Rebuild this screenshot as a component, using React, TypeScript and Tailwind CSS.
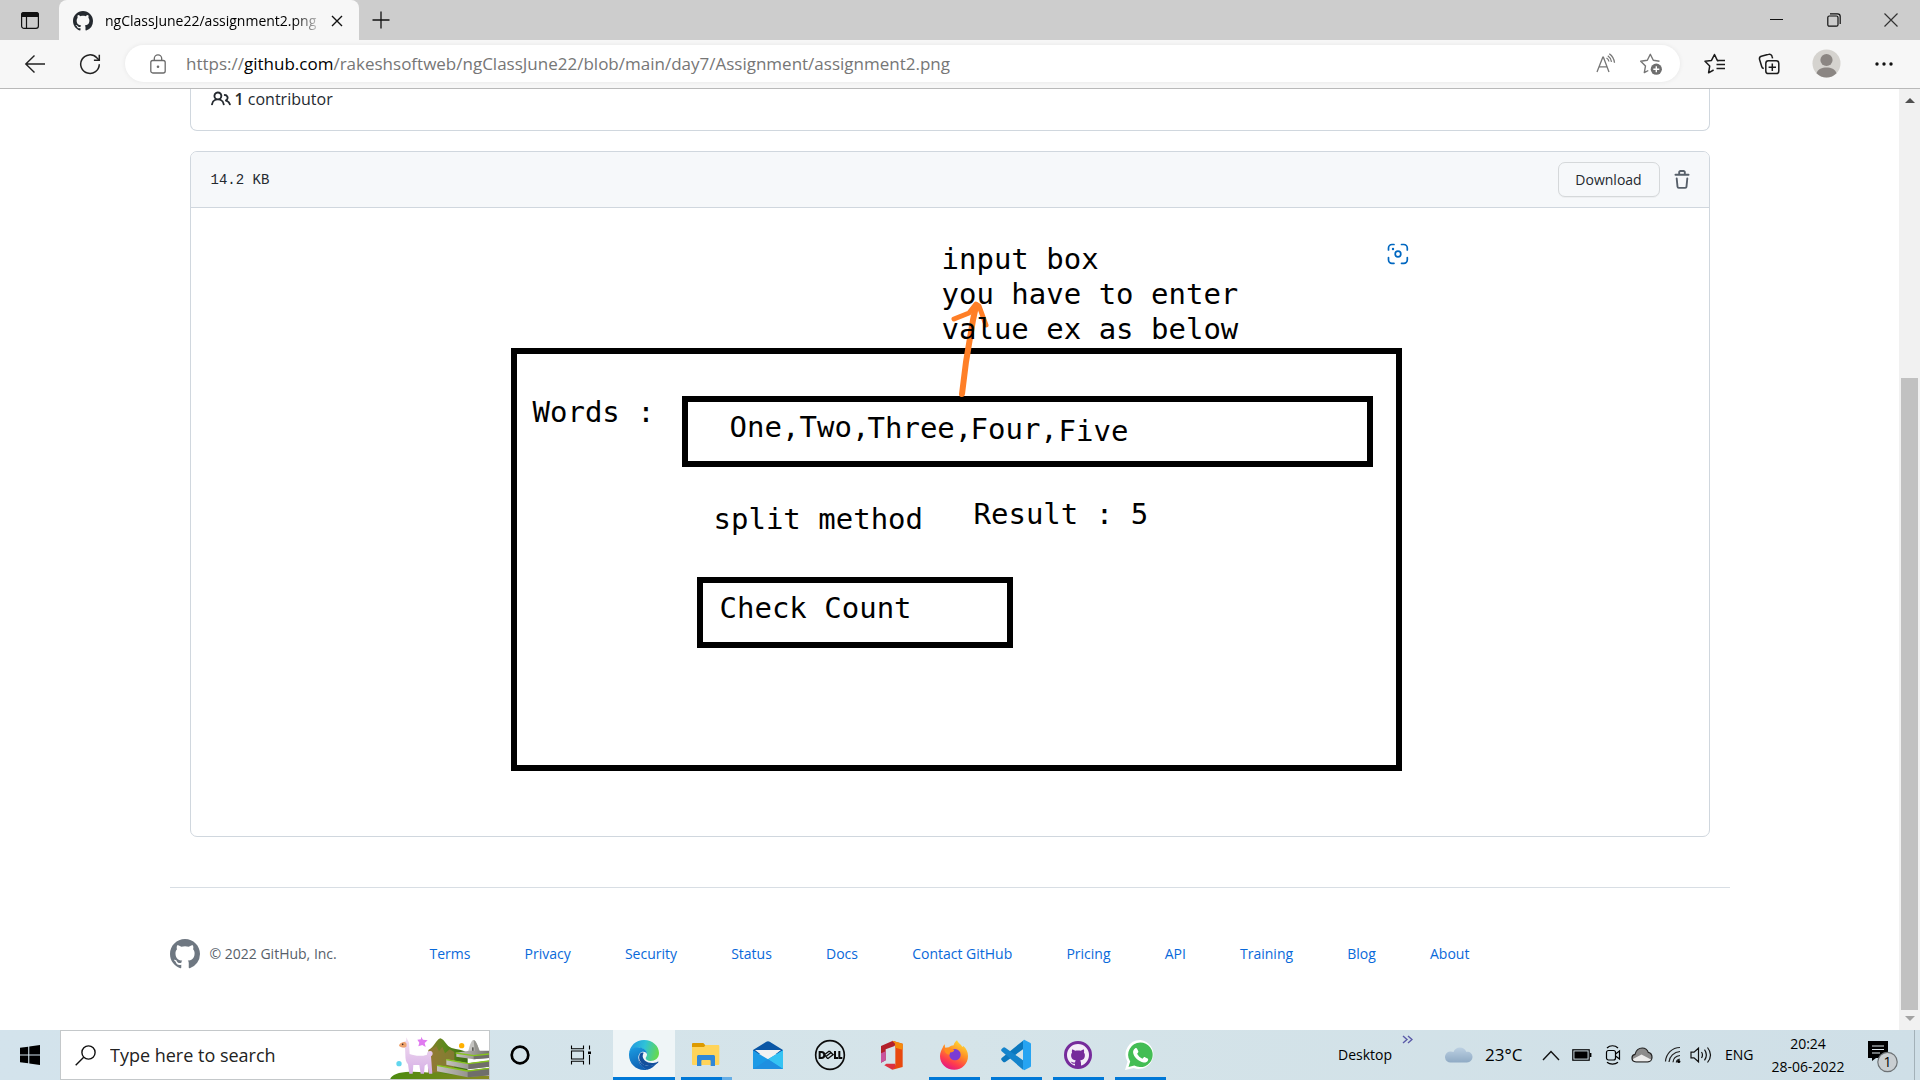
import type { ReactNode } from "react";

const SANS = "font-['Open_Sans','Noto_Sans',sans-serif]";

function GithubMark({ size, color, className }: { size: number; color: string; className?: string }) {
  return (
    <svg width={size} height={size} viewBox="0 0 16 16" fill={color} className={className}>
      <path
        fillRule="evenodd"
        d="M8 0C3.580 0 0 3.580 0 8c0 3.540 2.290 6.530 5.470 7.590.4.070.550-.170.550-.380 0-.190-.010-.820-.010-1.490-2.010.370-2.530-.490-2.690-.940-.090-.230-.480-.940-.820-1.130-.280-.150-.680-.520-.010-.530.630-.010 1.080.580 1.230.820.720 1.210 1.870.870 2.330.660.070-.520.280-.870.510-1.070-1.780-.200-3.640-.890-3.640-3.950 0-.870.310-1.590.820-2.150-.080-.200-.360-1.020.080-2.120 0 0 .670-.210 2.200.820.640-.180 1.320-.270 2-.270.680 0 1.360.090 2 .270 1.530-1.040 2.200-.820 2.200-.820.440 1.100.160 1.920.080 2.120.510.560.820 1.270.820 2.150 0 3.070-1.870 3.750-3.650 3.950.290.250.540.730.540 1.480 0 1.070-.010 1.930-.010 2.200 0 .210.150.460.550.380A8.013 8.013 0 0 0 16 8c0-4.420-3.580-8-8-8z"
      />
    </svg>
  );
}

function PeopleIcon() {
  return (
    <svg width="20" height="20" viewBox="0 0 16 16" fill="currentColor">
      <path
        fillRule="evenodd"
        d="M5.5 3.5a2 2 0 1 0 0 4 2 2 0 0 0 0-4zM2 5.5a3.5 3.5 0 1 1 5.898 2.549 5.507 5.507 0 0 1 3.034 4.084.75.75 0 1 1-1.482.235 4.001 4.001 0 0 0-7.9 0 .75.75 0 0 1-1.482-.236A5.507 5.507 0 0 1 3.102 8.05 3.49 3.49 0 0 1 2 5.5zM11 4a.75.75 0 1 0 0 1.5 1.5 1.5 0 0 1 .666 2.844.75.75 0 0 0-.416.672v.352a.75.75 0 0 0 .574.73c1.2.289 2.162 1.2 2.522 2.372a.75.75 0 1 0 1.434-.44 5.01 5.01 0 0 0-2.56-3.012A3 3 0 0 0 11 4z"
      />
    </svg>
  );
}

function TrashIcon() {
  return (
    <svg width="20" height="20" viewBox="0 0 16 16" fill="currentColor">
      <path
        fillRule="evenodd"
        d="M6.5 1.75a.25.25 0 0 1 .25-.25h2.5a.25.25 0 0 1 .25.25V3h-3V1.75zm4.5 0V3h2.25a.75.75 0 0 1 0 1.5H2.75a.75.75 0 0 1 0-1.5H5V1.75C5 .784 5.784 0 6.75 0h2.5C10.216 0 11 .784 11 1.75zM4.496 6.675a.75.75 0 1 0-1.492.15l.66 6.6A1.75 1.75 0 0 0 5.405 15h5.19c.9 0 1.652-.681 1.741-1.576l.66-6.6a.75.75 0 0 0-1.492-.149l-.66 6.6a.25.25 0 0 1-.249.225h-5.19a.25.25 0 0 1-.249-.225l-.66-6.6z"
      />
    </svg>
  );
}

/* ---------- Browser chrome ---------- */

function TabStrip() {
  return (
    <header className="flex h-10 items-stretch bg-[#cdcdcd] pb-px">
      <button aria-label="Tab actions" className="flex w-[59px] items-center justify-center">
        <svg width="20" height="20" viewBox="0 0 20 20" fill="none" stroke="#111" strokeWidth="1.2">
          <rect x="1.6" y="2.6" width="16.8" height="15.8" rx="2.4" />
          <path d="M1.6 6.5V5a2.4 2.4 0 0 1 2.4-2.4h12A2.4 2.4 0 0 1 18.4 5v1.5z" fill="#111" />
          <path d="M6.5 6.5v12" />
        </svg>
      </button>
      <div className="-mb-[2px] flex w-[300px] items-center rounded-t-lg bg-[#f7f7f7] pl-[14px] pr-2">
        <GithubMark size={20} color="#24292f" className="shrink-0" />
        <div className="ml-3 w-[218px] whitespace-nowrap text-sm leading-5 text-black [mask-image:linear-gradient(to_right,#000_190px,transparent)]">
          ngClassJune22/assignment2.png
        </div>
        <button aria-label="Close tab" className="flex flex-1 items-center justify-center">
          <svg width="12" height="12" viewBox="0 0 12 12" stroke="#111" strokeWidth="1.4">
            <path d="M1 1l10 10M11 1L1 11" />
          </svg>
        </button>
      </div>
      <button aria-label="New tab" className="flex w-11 items-center justify-center">
        <svg width="18" height="18" viewBox="0 0 18 18" stroke="#111" strokeWidth="1.3">
          <path d="M9 .5v17M.5 9h17" />
        </svg>
      </button>
      <div className="flex-1" />
      <button aria-label="Minimize" className="flex w-[57px] items-center justify-center">
        <svg width="13" height="13" viewBox="0 0 13 13" stroke="#111">
          <path d="M0 6.5h13" />
        </svg>
      </button>
      <button aria-label="Restore" className="flex w-[57px] items-center justify-center">
        <svg width="14" height="14" viewBox="0 0 14 14" fill="none" stroke="#111" strokeWidth="1.2">
          <rect x=".8" y="3" width="10.2" height="10.2" rx="1.5" />
          <path d="M3 .8h7.5a2.7 2.7 0 0 1 2.7 2.7V11" />
        </svg>
      </button>
      <button aria-label="Close window" className="flex w-[58px] items-center justify-center">
        <svg width="14" height="14" viewBox="0 0 14 14" stroke="#333" strokeWidth="1.2">
          <path d="M.5.5l13 13M13.5.5l-13 13" />
        </svg>
      </button>
    </header>
  );
}

function Toolbar() {
  return (
    <nav className="flex h-[49px] items-center border-b border-[#b9b9b9] bg-[#f7f7f7] pr-6 pb-px">
      <button aria-label="Back" className="ml-6 flex w-[22px] items-center">
        <svg width="22" height="20" viewBox="0 0 22 20" fill="none" stroke="#222" strokeWidth="1.4">
          <path d="M21 10H1.8M10.5 1.5L1.8 10l8.7 8.5" />
        </svg>
      </button>
      <button aria-label="Refresh" className="ml-[33px] flex w-[22px] items-center">
        <svg width="22" height="22" viewBox="0 0 22 22" fill="none" stroke="#222" strokeWidth="1.5">
          <path d="M20.3 11.3A9.3 9.3 0 1 1 17.8 4.8l2.2 2.2" />
          <path d="M20.3 1.8v5.4h-5.4" />
        </svg>
      </button>
      <div className="ml-6 flex h-[37px] flex-1 items-center rounded-full bg-white pl-[25px] pr-[17px] shadow-[0_0_5px_rgba(0,0,0,0.07)]">
        <svg width="16" height="20" viewBox="0 0 16 20" fill="none" stroke="#6b6b6b" strokeWidth="1.3">
          <rect x=".8" y="6.5" width="14.4" height="12.5" rx="2" />
          <path d="M4.3 6.5V4.5a3.7 3.7 0 0 1 7.4 0v2" />
          <circle cx="8" cy="12.7" r="1.3" fill="#6b6b6b" stroke="none" />
        </svg>
        <label className="relative ml-5 flex-1 text-[17px] leading-6 text-[#767676]">
          <span>https://</span>
          <span className="text-black">github.com</span>
          <span>/rakeshsoftweb/ngClassJune22/blob/main/day7/Assignment/assignment2.png</span>
          <input aria-label="Address" className="absolute inset-0 w-full opacity-0" />
        </label>
        <button aria-label="Read aloud">
          <svg width="22" height="22" viewBox="0 0 22 22" fill="none" stroke="#767676" strokeWidth="1.3">
            <path d="M2 19L7.8 4.2h.6L14 19M4.2 13.8h7.6" />
            <path d="M11.500 5c1.400.8 2.200 2 2.400 3.500M12.800 2.800c2 1.400 3.300 3.300 3.700 6M14.300.8c2.900 2 4.800 4.900 5.200 9" />
          </svg>
        </button>
        <button aria-label="Add to favorites" className="ml-[22px]">
          <svg width="24" height="24" viewBox="0 0 24 24" fill="none">
            <path d="M20.500 9.200L14.300 8.300 11.300 2.300 8.300 8.300 1.700 9.200l4.800 4.700-1.200 6.700 4-2.100" stroke="#767676" strokeWidth="1.4" strokeLinejoin="round" />
            <circle cx="17.300" cy="17.200" r="5.600" fill="#6e6e6e" />
            <path d="M17.300 14.200v6M14.300 17.200h6" stroke="#fff" strokeWidth="1.400" />
          </svg>
        </button>
      </div>
      <button aria-label="Favorites" className="ml-6">
        <svg width="22" height="22" viewBox="0 0 22 22" fill="none" stroke="#1b1b1b" strokeWidth="1.5" strokeLinejoin="round">
          <path d="M14.500 7.700L13.300 7.400 10.500 1.500 7.500 7.400 1 8.300l4.700 4.800-1.100 6.700 5-2.800" />
          <path d="M13 7.500h8M12.500 11.500H21M12.500 15.500H21" />
        </svg>
      </button>
      <button aria-label="Collections" className="ml-8">
        <svg width="22" height="22" viewBox="0 0 22 22" fill="none" stroke="#1b1b1b" strokeWidth="1.5">
          <rect x="7.800" y="7.800" width="13" height="12.800" rx="2.600" />
          <path d="M14.300 10.500v7.400M10.600 14.200H18" />
          <path d="M5.800 15.600A2.700 2.700 0 0 1 3.700 13.500L1.500 6.300A2.600 2.600 0 0 1 3.300 3.300l7.400-2A2.600 2.600 0 0 1 14 3.200l.6 2.200" />
        </svg>
      </button>
      <button aria-label="Profile" className="ml-8">
        <svg width="29" height="29" viewBox="0 0 29 29">
          <circle cx="14.500" cy="14.500" r="14" fill="#d5d3cf" />
          <circle cx="14.500" cy="11" r="6.100" fill="#8b8683" />
          <path d="M4.500 24.300C6 20 10 18.600 14.500 18.600S23 20 24.500 24.300A14 14 0 0 1 4.500 24.300z" fill="#8b8683" />
        </svg>
      </button>
      <button aria-label="Settings and more" className="ml-[31px]">
        <svg width="24" height="20" viewBox="0 0 24 20" fill="#111">
          <circle cx="5" cy="10" r="1.700" />
          <circle cx="12" cy="10" r="1.700" />
          <circle cx="19" cy="10" r="1.700" />
        </svg>
      </button>
    </nav>
  );
}

function Scrollbar() {
  return (
    <div className="flex w-[21px] flex-col items-center bg-[#f1f1f1] py-2">
      <svg width="10" height="8" viewBox="0 0 10 8">
        <path d="M5 1l5 5H0z" fill="#505050" />
      </svg>
      <div className="grow-[273]" />
      <div className="w-[17px] grow-[632] bg-[#c1c1c1]" />
      <svg width="10" height="8" viewBox="0 0 10 8" className="mt-1">
        <path d="M5 7L0 2h10z" fill="#a3a3a3" />
      </svg>
    </div>
  );
}

/* ---------- Page ---------- */

function Note({ className, children }: { className: string; children: ReactNode }) {
  return (
    <div className={`absolute whitespace-pre font-['DejaVu_Sans_Mono',monospace] text-[29px] leading-[35px] text-black ${className}`}>
      {children}
    </div>
  );
}

function Sketch() {
  return (
    <figure className="relative mx-auto h-[628px] w-[920px]">
      <div className="absolute top-[140px] left-[21px] h-[423px] w-[891px] border-[6px] border-black" />
      <div className="absolute top-[188px] left-[192px] h-[71px] w-[691px] border-[6px] border-black" />
      <div className="absolute top-[369px] left-[207px] h-[71px] w-[316px] border-[6px] border-black" />
      <svg className="absolute top-[90px] left-[443px]" width="60" height="104" viewBox="0 0 60 104" fill="none" stroke="#ff7f27" strokeLinecap="round" strokeLinejoin="round">
        <path d="M29 96L33 64 40 22 43 8" strokeWidth="6" />
        <path d="M21 21L36 15 43 6 46 8 53 27" strokeWidth="5" />
      </svg>
      <Note className="top-[34px] left-[452px]">{"input box\nyou have to enter\nvalue ex as below"}</Note>
      <Note className="top-[187px] left-[43px]">Words :</Note>
      <Note className="top-[202px] left-[240px]">One,</Note>
      <Note className="top-[202px] left-[310px]">Two,</Note>
      <Note className="top-[203px] left-[378px]">Three,</Note>
      <Note className="top-[204px] left-[481px]">Four,</Note>
      <Note className="top-[206px] left-[569px]">Five</Note>
      <Note className="top-[294px] left-[224px]">split method</Note>
      <Note className="top-[289px] left-[484px]">Result : 5</Note>
      <Note className="top-[383px] left-[230px]">Check Count</Note>
      <button aria-label="Visual search" className="absolute top-[34px] right-0">
        <svg width="24" height="24" viewBox="0 0 24 24" fill="none" stroke="#0067c0" strokeWidth="1.700" strokeLinecap="round">
          <path d="M2.500 8V6A3.500 3.500 0 0 1 6 2.500h2M15.500 2.500h2.300A3.500 3.500 0 0 1 21.300 6v2M21.300 15.500v2.300a3.500 3.500 0 0 1-3.500 3.500h-2.300M8 21.300H6a3.500 3.500 0 0 1-3.500-3.500v-2.300" />
          <circle cx="12" cy="12" r="2.800" />
          <circle cx="7" cy="7" r="1.200" fill="#0067c0" stroke="none" />
        </svg>
      </button>
    </figure>
  );
}

const FOOTER_LINKS = ["Terms", "Privacy", "Security", "Status", "Docs", "Contact GitHub", "Pricing", "API", "Training", "Blog", "About"];

function Page() {
  return (
    <main className="flex-1 bg-white">
      <div className="mx-auto max-w-[1560px]">
        <section className="mx-5 flex items-start rounded-b-[7px] border border-t-0 border-[#d0d7de] px-5 pb-[21px] text-base leading-5 text-[#24292f]">
          <PeopleIcon />
          <a href="#contributors" className="ml-1">
            <b className="font-semibold">1</b> contributor
          </a>
        </section>
        <section className="mx-5 mt-5 overflow-hidden rounded-[7px] border border-[#d0d7de]">
          <div className="flex h-14 items-center border-b border-[#d0d7de] bg-[#f6f8fa] pl-5 pr-[17px]">
            <span className="font-['Liberation_Mono',monospace] text-sm text-[#24292f]">14.2 KB</span>
            <a href="#download" className="ml-auto flex h-[35px] w-[102px] items-center justify-center rounded-[7px] border border-[#d5d8da] bg-[#f6f8fa] text-sm font-medium text-[#24292f] shadow-[0_1px_0_rgba(27,31,36,0.04)]">
              Download
            </a>
            <button aria-label="Delete this file" className="ml-3 text-[#57606a]">
              <TrashIcon />
            </button>
          </div>
          <Sketch />
        </section>
        <footer className="mt-[50px] grid grid-cols-[2fr_8fr_2fr] items-center border-t border-[#d8dee4] pt-[51px] pb-11 text-sm leading-[30px]">
          <div className="flex items-center text-[#57606a]">
            <GithubMark size={30} color="#6e7781" />
            <span className="ml-[10px]">© 2022 GitHub, Inc.</span>
          </div>
          <ul className="flex justify-between text-[#0969da]">
            {FOOTER_LINKS.map((name) => (
              <li key={name}>
                <a href="#footer">{name}</a>
              </li>
            ))}
          </ul>
        </footer>
      </div>
    </main>
  );
}

/* ---------- Taskbar ---------- */

function SearchArt() {
  return (
    <svg width="99" height="48" viewBox="1173 33 297 144" className="ml-auto shrink-0">
      <defs>
        <linearGradient id="hill" x1="0" x2="1">
          <stop offset="0" stopColor="#4c8a10" />
          <stop offset="1" stopColor="#8a8a22" />
        </linearGradient>
        <linearGradient id="mount" x1="0" x2="1">
          <stop offset="0" stopColor="#8c7a2a" />
          <stop offset=".4" stopColor="#5c8a1c" />
          <stop offset="1" stopColor="#3d6b12" />
        </linearGradient>
        <linearGradient id="stone" x1="0" x2="1">
          <stop offset="0" stopColor="#c4c2bd" />
          <stop offset="1" stopColor="#77756f" />
        </linearGradient>
        <linearGradient id="llama" x1="0" x2="0" y1="0" y2="1">
          <stop offset="0" stopColor="#f3e0f0" />
          <stop offset="1" stopColor="#d5aee6" />
        </linearGradient>
      </defs>
      <path d="M1288 90c18-8 22-30 36-35 14 4 18 24 34 29 16 4 34 6 48 14v70h-118z" fill="url(#mount)" />
      <path d="M1290 92c8-6 16-8 22-14l8 16 10-14 8 20 14-12 14 8v60h-76z" fill="#96783a" opacity=".75" />
      <path d="M1173 180c2-14 22-24 60-25 50-1 100 8 150 10l87 2v13z" fill="url(#hill)" />
      <path d="M1406 104c4-22 10-44 18-44s16 28 22 44z" fill="#c4c3c0" />
      <path d="M1424 60c8 0 16 28 22 44h-18z" fill="#95948f" />
      <rect x="1419" y="82" width="5" height="14" fill="#5f5e5a" />
      <path d="M1372 98l38-6h60v22l-46 4-52-8z" fill="url(#stone)" />
      <path d="M1342 118l66 12 62-8v18l-62 8-66-14z" fill="url(#stone)" />
      <path d="M1314 136l92 16 64-8v22l-64 6-92-18z" fill="url(#stone)" />
      <path d="M1406 152l64-8v22l-64 6zM1408 130l62-8v18l-62 8zM1424 106l46-5v13l-46 4z" fill="#706e6a" />
      <path d="M1370 99l54 8 46-5M1342 119l66 12 62-8M1314 136l92 17 64-8" fill="none" stroke="#86c41e" strokeWidth="4" />
      <path d="M1222 52l8 16 2 34c16 6 34 8 52 2 0-8 4-12 10-11 9 1 9 12 2 16l4 52h-10l-5-30-8 6-2 24h-10l-4-26h-18l-2 26h-10l-4-28c-6-6-8-16-8-28l-1-22c-8 1-13-2-14-8 4-8 10-10 17-12z" fill="url(#llama)" />
      <path d="M1214 66c8 0 10 6 8 14-10 5-21 2-22-4 2-6 8-9 14-10z" fill="#eea46f" />
      <circle cx="1211" cy="73" r="2.500" fill="#3a2222" />
      <path d="M1266 50l6 9 14 2-9 8 3 12-10-6-12 4 3-11-6-9 11-1z" fill="#e07bf0" />
      <circle cx="1388" cy="77" r="8" fill="#ffb000" />
      <circle cx="1200" cy="131" r="8" fill="#62d6ee" />
    </svg>
  );
}

function Task({ label, children, active, open, more }: { label: string; children: ReactNode; active?: boolean; open?: boolean; more?: boolean }) {
  return (
    <button aria-label={label} className={`flex w-[62px] shrink-0 flex-col items-center ${active ? "bg-[#eff5f7]" : ""}`}>
      <span className="flex h-[47px] items-center pt-[3px]">{children}</span>
      {active && <span className="h-[3px] w-full bg-[#0078d7]" />}
      {open && (
        <span className="flex h-[3px] w-[51px] bg-[#0078d7]">{more && <span className="ml-auto w-[10px] bg-[#66aee6]" />}</span>
      )}
    </button>
  );
}

function EdgeIcon() {
  return (
    <svg width="32" height="32" viewBox="0 0 96 96">
      <defs>
        <linearGradient id="e1" x1="0" y1=".3" x2="1" y2=".5">
          <stop offset="0" stopColor="#2196e0" />
          <stop offset=".5" stopColor="#2fc2d8" />
          <stop offset="1" stopColor="#66d94d" />
        </linearGradient>
        <linearGradient id="e2" x1="0" y1="0" x2=".3" y2="1">
          <stop offset="0" stopColor="#1b9de2" />
          <stop offset="1" stopColor="#0f62b4" />
        </linearGradient>
      </defs>
      <path d="M3 45C5 20 24 3 48 3c26 0 45 18 45 39 0 16-12 24-25 24-10 0-15-4-15-8 0-3 4-5 4-12 0-12-14-20-27-20C16 26 6 35 3 45z" fill="url(#e1)" />
      <path d="M3 48C3 34 15 25 29 25c16 0 28 9 28 20-2-5-7-7-11-7-9 0-15 8-15 19 0 16 12 29 27 35-4 1-7 1-10 1C23 93 3 73 3 48z" fill="url(#e2)" />
      <path d="M38 42c-5 6-6 14-3 22 5 12 17 18 31 17 9-1 18-4 24-10 2-2 1-4-1-3-6 3-12 4-17 4-16 0-27-9-28-20 0-4 1-8 3-11-4-1-7-1-9 1z" fill="#134f9c" />
      <path d="M31 57c0 16 12 30 27 35 12-3 22-10 28-20-9 8-20 10-29 8-15-3-24-12-26-23z" fill="#1053a4" />
    </svg>
  );
}

function FirefoxIcon() {
  return (
    <svg width="30" height="30" viewBox="266 57 90 90">
      <defs>
        <linearGradient id="f1" x1=".8" y1="0" x2=".3" y2="1">
          <stop offset="0" stopColor="#ffe636" />
          <stop offset=".45" stopColor="#ff8a26" />
          <stop offset=".75" stopColor="#ff3d4d" />
          <stop offset="1" stopColor="#e11586" />
        </linearGradient>
      </defs>
      <path d="M284 70c-1 5 0 8 1 10l10-1c5-4 10-6 15-6 1-6 5-11 10-15 3 7 8 10 12 14l4 6 3-3c9 8 14 18 14 30 0 24-18 41-41 41-25 0-43-17-43-41 0-12 5-19 8-25 1-4 3-7 7-10z" fill="url(#f1)" />
      <circle cx="314" cy="101" r="17" fill="#7a3bd4" />
      <path d="M282 84c8-5 20-4 28 2 4 3-2 7-8 8-3 1-4 3-4 7-9 0-16-7-16-17z" fill="#ff8f1f" />
    </svg>
  );
}

function TaskIcons() {
  return (
    <div className="-ml-px flex">
      <Task label="Cortana">
        <svg width="20" height="20" viewBox="0 0 20 20" fill="none" stroke="#000">
          <circle cx="10" cy="10" r="8.300" strokeWidth="2.700" />
        </svg>
      </Task>
      <Task label="Task view">
        <svg width="24" height="20" viewBox="0 0 24 20" fill="none" stroke="#000" strokeWidth="1.100">
          <path d="M1.500.5v3.300h12V.5M1.500 19.500v-3.300h12v3.300M1.500 6h12v8h-12zM19.500.5v4M19.500 10v9.500" />
          <rect x="18" y="6.500" width="3" height="2.600" fill="#000" stroke="none" />
        </svg>
      </Task>
      <Task label="Microsoft Edge" active>
        <EdgeIcon />
      </Task>
      <Task label="File Explorer" open more>
        <svg width="30" height="28" viewBox="603 63 90 84">
          <path d="M606 72c0-2 1-3 3-3h31l6 7v12h-40z" fill="#dd9a00" />
          <path d="M606 81h36l5-6h38c2 0 3 1 3 3v54c0 2-1 3-3 3h-76c-2 0-3-1-3-3z" fill="#ffd45a" />
          <path d="M621 138v-28c0-3 2-5 5-5h44c3 0 5 2 5 5v28h-13v-15c0-2-1-3-3-3h-22c-2 0-3 1-3 3v15z" fill="#2f87d8" />
        </svg>
      </Task>
      <Task label="Mail">
        <svg width="32" height="30" viewBox="786 60 96 90">
          <path d="M789 90l40-25c3-2 7-2 10 0l40 25v12h-90z" fill="#0a56a5" />
          <path d="M795 90h78l-39 30z" fill="#f2f2f2" />
          <path d="M789 91l45 27 45-27v56h-90z" fill="#1c9ae6" />
          <path d="M834 118l45-27v56z" fill="#35c3f3" />
          <path d="M789 147l45-29 45 29z" fill="#1f8fe0" />
        </svg>
      </Task>
      <Task label="Dell">
        <svg width="32" height="32" viewBox="972 57 96 96" fill="none" stroke="#0b0b0b">
          <circle cx="1020" cy="105" r="43" strokeWidth="5" />
          <path d="M989 96v18h5c12 0 12-18 0-18zM1035 93v21h9M1048 93v21h9" strokeWidth="6" />
          <path d="M1003 104l15-11M1007 110l17-13M1013 116l18-13M1003 104l10 12M1018 93l10 10" strokeWidth="4" />
        </svg>
      </Task>
      <Task label="Office">
        <svg width="26" height="30" viewBox="85 58 78 90">
          <path d="M91 76l34-15 10 3-3 12-27 10v33l-14 7z" fill="#b3202a" />
          <path d="M91 98l14-6v27l-14 7z" fill="#c9549d" />
          <path d="M125 60l31 9v70l-31 8 9-14V70z" fill="#e8490f" />
          <path d="M125 60l31 9v18l-22-6V70z" fill="#f58b0b" />
          <path d="M101 134l6-5h27v10l-9 8z" fill="#dc3140" />
        </svg>
      </Task>
      <Task label="Firefox" open>
        <FirefoxIcon />
      </Task>
      <Task label="Visual Studio Code" open>
        <svg width="32" height="32" viewBox="450 57 96 96">
          <path d="M519 62v26l-53 38c-3 2-5 1-7-1l-4-4c-2-2-2-5 0-7z" fill="#0b78be" />
          <path d="M455 94c-2-2-2-5 0-7l4-4c2-2 5-2 7 0l53 38v28z" fill="#1484cc" />
          <path d="M519 62c2-2 3-3 5-2l16 8c2 1 3 2 3 4v66c0 2-1 3-3 4l-16 8c-2 1-4 0-5-2z" fill="#27a4f2" />
        </svg>
      </Task>
      <Task label="GitHub Desktop" open>
        <svg width="28" height="28" viewBox="0 0 28 28">
          <circle cx="14" cy="14" r="12.500" fill="#f4edf8" stroke="#762b9b" strokeWidth="3" />
          <path d="M8.300 8.200l3 1.500c1.800-.4 3.600-.4 5.400 0l3-1.500c.5 1.300.5 2.400.2 3.400 1 1.200 1.200 2.700.8 4.400-.6 2.200-2.400 3.100-4.500 3.400.6.700.8 1.500.8 2.600v4h-6v-3.200c-2.800.4-3.300-1.300-4.300-2.100 1.800-.4 2.400 1.300 4.300.7 0-.8.2-1.500.8-2-2.100-.3-3.900-1.200-4.500-3.400-.4-1.700-.2-3.200.8-4.400-.3-1-.3-2.100.2-3.400z" fill="#762b9b" />
        </svg>
      </Task>
      <Task label="WhatsApp" open>
        <svg width="32" height="32" viewBox="0 0 32 32">
          <path d="M16.500 1A14.500 14.500 0 1 1 9.800 29L1 31l2.500-8.300A14.500 14.500 0 0 1 16.500 1z" fill="#fff" />
          <path d="M16.300 3.500a12.300 12.300 0 1 1-6 23L4.500 28l1.700-5.500A12.300 12.300 0 0 1 16.300 3.500z" fill="#43bd54" />
          <path d="M11 9.500c.7-.6 1.700-.6 2.100.2l1.200 2.600c.3.700-.1 1.300-1.200 2.500 1.300 2.400 2.900 3.800 5.400 4.900 1.200-1.400 1.700-1.900 2.500-1.500l2.500 1.300c.8.400.8 1 .4 2-.7 1.600-2.700 2.300-4.200 2-5.400-1-10.200-5.800-10.600-10-.1-1.600.6-3 1.900-4z" fill="#fff" />
        </svg>
      </Task>
    </div>
  );
}

function Tray() {
  return (
    <div className="ml-auto flex shrink-0 items-center text-black">
      <span className="text-sm">Desktop</span>
      <svg width="11" height="9" viewBox="0 0 11 9" fill="none" stroke="#5a5aa8" strokeWidth="1.400" className="ml-[10px] mb-8">
        <path d="M1 1l4 3.500L1 8M6 1l4 3.500L6 8" />
      </svg>
      <svg width="28" height="16" viewBox="0 0 28 16" className="ml-8">
        <defs>
          <linearGradient id="cloud" x1="0" x2="0" y1="0" y2="1">
            <stop offset="0" stopColor="#bcd0e2" />
            <stop offset="1" stopColor="#8faac4" />
          </linearGradient>
        </defs>
        <path d="M6 15.500a5.500 5.500 0 0 1-1-11c1.500-.2 2.500.1 3.500.5C9.500 2 12 .5 14.800.5c3.400 0 5.500 1.800 6.400 4.300 3.500-.5 6.300 1.700 6.300 5s-2.500 5.700-5.500 5.700z" fill="url(#cloud)" />
      </svg>
      <span className="ml-3 w-[45px] text-[17px]">23°C</span>
      <svg width="18" height="11" viewBox="0 0 18 11" fill="none" stroke="#111" strokeWidth="1.400" className="ml-3">
        <path d="M1 10l8-8.500L17 10" />
      </svg>
      <svg width="20" height="12" viewBox="0 0 20 12" fill="none" stroke="#000" strokeWidth="1.200" className="ml-3">
        <rect x=".8" y=".8" width="16.400" height="10.400" />
        <rect x="3" y="3" width="12" height="6" fill="#000" />
        <path d="M18.600 4v4" strokeWidth="1.600" />
      </svg>
      <svg width="16" height="20" viewBox="0 0 16 20" fill="none" stroke="#000" strokeWidth="1.200" className="ml-[13px]">
        <rect x="1.500" y="5.500" width="9" height="9.500" rx="2" />
        <path d="M10.500 9l4-3v8l-4-3M2 3c3-3 8-3 11 0M2 17.300c3 2.500 8 2.500 11 0" />
      </svg>
      <svg width="22" height="16" viewBox="0 0 22 16" stroke="#222" strokeWidth="1.200" className="ml-[10px]">
        <path d="M5 14.800C2.500 14.800 1 13 1 11c0-2 1.500-3.500 3-3.700C5 3.500 8 1 11.300 1c3 0 5 1.600 6 4.400C19.800 6 21 8 21 10.300c0 2.700-1.800 4.500-4.200 4.500z" fill="#8c8c8c" />
        <path d="M5 14.200C3.500 14.200 2 13.500 2 12l8.500-4.500L20 12.500c-.8 1.300-2 1.700-3.500 1.700z" fill="#ececec" stroke="none" />
      </svg>
      <svg width="18" height="18" viewBox="0 0 18 18" fill="none" stroke="#222" strokeWidth="1.200" className="ml-[11px]">
        <path d="M1.500 15.500C2 8 8 1.500 16 1.500M5 16c.3-5.500 5-10 11-10.500M9 16.300c.2-3.500 3-6.300 7-6.800M12.300 16.500c.2-1.600 1.500-3 3.500-3.300" />
        <circle cx="14.800" cy="15.500" r="1.600" fill="#000" stroke="none" />
      </svg>
      <svg width="22" height="18" viewBox="0 0 22 18" fill="none" stroke="#111" strokeWidth="1.200" className="ml-2">
        <path d="M1 6.200h3l4.500-4v13.600l-4.500-4H1zM11.500 6c1.300 2 1.300 4 0 6M14.500 3.700c2.500 3.500 2.500 7 0 10.600M17.500 1.500c4 5 4 10 0 15" />
      </svg>
      <span className="ml-[13px] w-8 text-sm">ENG</span>
      <time className="ml-[6px] w-[90px] text-center text-sm leading-[23px]">
        20:24
        <br />
        28-06-2022
      </time>
      <button aria-label="Notifications, 1 new" className="ml-[13px] mr-4 pt-1">
        <svg width="32" height="38" viewBox="0 0 32 38">
          <path d="M2 3h20v17H10l-4 3v-3H2z" fill="#000" />
          <path d="M6 8h12M6 11.500h12M6 15h8" stroke="#dfe9ee" strokeWidth="1.200" />
          <circle cx="21.500" cy="24" r="9.700" fill="#c9ced1" stroke="#6d7275" strokeWidth="1.200" />
          <text x="21.500" y="29" fontSize="14" textAnchor="middle" fill="#000">1</text>
        </svg>
      </button>
      <span className="mr-[5px] h-[50px] w-px bg-[#a3b1b8]" />
    </div>
  );
}

function Taskbar() {
  return (
    <div className="flex h-[50px] items-stretch bg-linear-to-r from-[#d3e3ec] via-[#d5e4e9] to-[#cfdfe7]">
      <button aria-label="Start" className="flex w-[60px] shrink-0 items-center justify-center">
        <svg width="20" height="20" viewBox="0 0 20 20" fill="#000">
          <path d="M0 2.800L8.200 1.700v7.800H0zM9.300 1.500L20 0v9.500H9.300zM0 10.500h8.200v7.800L0 17.200zM9.300 10.500H20V20L9.300 18.500z" />
        </svg>
      </button>
      <label className="flex w-[430px] shrink-0 items-center border border-[#c4c8ca] bg-white pl-[14px]">
        <svg width="21" height="21" viewBox="0 0 21 21" fill="none" stroke="#111" strokeWidth="1.400">
          <circle cx="13.500" cy="7.500" r="6.600" />
          <path d="M8.700 12.300L.7 20.300" />
        </svg>
        <input aria-label="Search" placeholder="Type here to search" className="ml-[14px] w-[220px] bg-transparent text-lg outline-none placeholder:text-[#222]" />
        <SearchArt />
      </label>
      <TaskIcons />
      <Tray />
    </div>
  );
}

export default function App() {
  return (
    <div className={`flex min-h-screen flex-col ${SANS}`}>
      <TabStrip />
      <Toolbar />
      <div className="flex flex-1">
        <Page />
        <Scrollbar />
      </div>
      <Taskbar />
    </div>
  );
}
